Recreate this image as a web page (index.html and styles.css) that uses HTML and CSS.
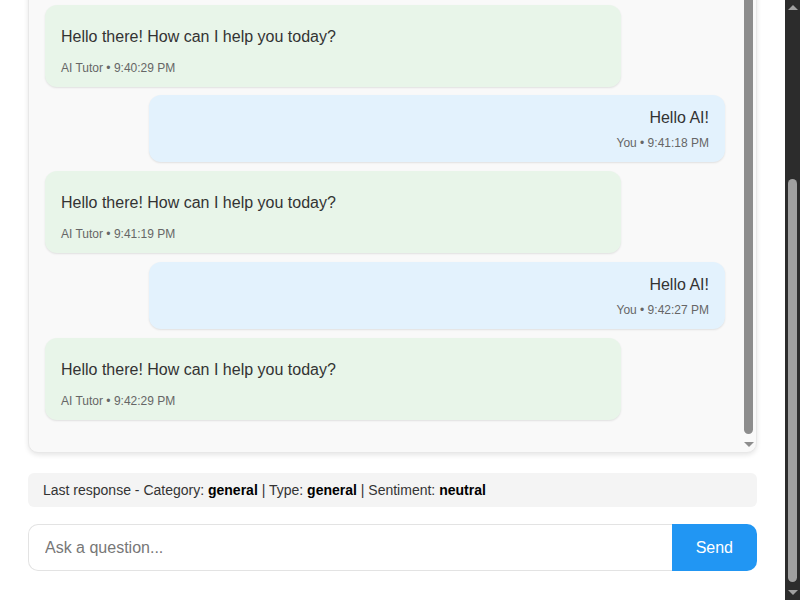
FILE: index.html
```html
<!DOCTYPE html>
<html lang="en">
<head>
<meta charset="utf-8">
<title>AI Tutor</title>
<link rel="stylesheet" href="styles.css">
</head>
<body>
<div class="app">
  <header class="app-header">
    <h1>AI Tutor</h1>
    <p>Ask me anything about your lessons.</p>
  </header>

  <div class="chat-panel">
    <div class="chat" id="chat">
      <div class="msg bot">
        <div class="text">Hi! I'm your AI tutor. What would you like to learn?</div>
        <div class="meta">AI Tutor &bull; 9:40:10 PM</div>
      </div>
      <div class="msg user">
        <div class="text">Hello AI!</div>
        <div class="meta">You &bull; 9:40:28 PM</div>
      </div>
      <div class="msg bot">
        <div class="text">Hello there! How can I help you today?</div>
        <div class="meta">AI Tutor &bull; 9:40:29 PM</div>
      </div>
      <div class="msg user">
        <div class="text">Hello AI!</div>
        <div class="meta">You &bull; 9:41:18 PM</div>
      </div>
      <div class="msg bot">
        <div class="text">Hello there! How can I help you today?</div>
        <div class="meta">AI Tutor &bull; 9:41:19 PM</div>
      </div>
      <div class="msg user">
        <div class="text">Hello AI!</div>
        <div class="meta">You &bull; 9:42:27 PM</div>
      </div>
      <div class="msg bot">
        <div class="text">Hello there! How can I help you today?</div>
        <div class="meta">AI Tutor &bull; 9:42:29 PM</div>
      </div>
    </div>
    <div class="vscroll chat-scrollbar" aria-hidden="true">
      <span class="vscroll-btn up"></span>
      <span class="vscroll-track" id="chat-track"><span class="vscroll-thumb" id="chat-thumb"></span></span>
      <span class="vscroll-btn down"></span>
    </div>
  </div>

  <div class="status">Last response - Category: <b>general</b> | Type: <b>general</b> | Sentiment: <b>neutral</b></div>

  <form class="composer">
    <input class="composer-input" type="text" placeholder="Ask a question...">
    <button class="composer-send" type="button">Send</button>
  </form>
</div>

<div class="vscroll page-scrollbar" aria-hidden="true">
  <span class="vscroll-btn up"></span>
  <span class="vscroll-track" id="page-track"><span class="vscroll-thumb" id="page-thumb"></span></span>
  <span class="vscroll-btn down"></span>
</div>

<script src="script.js"></script>
</body>
</html>
```

FILE: styles.css
```css
html {
  background: #fff;
}

body {
  margin: 8px 23px 8px 8px; /* right side leaves room for the page scrollbar */
  font-family: "Liberation Sans", Arial, sans-serif;
  color: #333;
}

.app {
  padding: 20px 20px 21px;
}

.app-header h1 {
  margin: 0 0 6px;
  font-size: 28px;
  line-height: 34px;
}

.app-header p {
  margin: 0 0 20px;
  line-height: 20px;
  color: #666;
}

/* chat panel */
.chat-panel {
  position: relative;
  background: #f9f9f9;
  border: 1px solid #e8e8e8;
  border-radius: 10px;
  box-shadow: 0 2px 5px rgba(0, 0, 0, 0.1);
}

.chat {
  box-sizing: border-box;
  height: 579px;
  overflow: hidden;
  padding: 16px 31px 32px 16px;
  display: flex;
  flex-direction: column;
  gap: 8.75px;
}

.msg {
  flex: none;
  width: 80%;
  padding: 14px 16px 12px;
  border-radius: 12px;
  box-shadow: 0 1px 2px rgba(0, 0, 0, 0.1);
  font-size: 16px;
}

.msg.bot {
  align-self: flex-start;
  background: #e8f5e9;
}

.msg.bot .text {
  padding: 9px 0 6px;
}

.msg.user {
  align-self: flex-end;
  background: #e3f2fd;
  text-align: right;
}

.meta {
  margin-top: 9px;
  font-size: 12px;
  color: #666;
}

/* scrollbars */
.vscroll {
  display: flex;
  flex-direction: column;
  width: 15px;
}

.vscroll-btn {
  flex: none;
  height: 15px;
  display: flex;
  align-items: center;
  justify-content: center;
}

.vscroll-btn::before {
  content: "";
  border-left: 5px solid transparent;
  border-right: 5px solid transparent;
}

.vscroll-btn.up::before {
  border-bottom: 5px solid currentColor;
}

.vscroll-btn.down::before {
  border-top: 5px solid currentColor;
}

.vscroll-track {
  flex: 1;
  position: relative;
}

.vscroll-thumb {
  position: absolute;
  left: 0;
  right: 0;
  box-sizing: border-box;
  border: 3px solid transparent;
  border-radius: 8px;
  background: currentColor;
  background-clip: padding-box;
}

.chat-scrollbar {
  position: absolute;
  top: 0;
  right: 0;
  bottom: 0;
  color: #8d8d8d;
}

.page-scrollbar {
  position: fixed;
  top: 0;
  right: 0;
  bottom: 0;
  background: #2c2c2c;
  color: #a0a0a0;
}

/* status + composer */
.status {
  margin-top: 20px;
  padding: 9px 15px;
  background: #f4f4f4;
  border-radius: 6px;
  font-size: 14px;
  color: #333;
}

.status b {
  color: #000;
}

.composer {
  display: flex;
  margin: 17px 0 0;
}

.composer-input {
  flex: 1;
  min-width: 0;
  padding: 14px 16px 13px;
  border: 1px solid #e3e3e3;
  border-right: none;
  border-radius: 10px 0 0 10px;
  font-family: inherit;
  font-size: 16px;
  color: #333;
  outline: none;
}

.composer-input::placeholder {
  color: #777;
}

.composer-send {
  padding: 0 24px;
  border: none;
  border-radius: 0 10px 10px 0;
  background: #2196f3;
  color: #fff;
  font-family: inherit;
  font-size: 16px;
  cursor: pointer;
}
```

FILE: script.js
```js
function placeThumb(thumb, track, pos, visible, total) {
  var h = track.clientHeight;
  thumb.style.top = (pos / total * h) + 'px';
  thumb.style.height = (visible / total * h) + 'px';
}

var chat = document.getElementById('chat');
chat.scrollTop = chat.scrollHeight;

var doc = document.documentElement;
window.scrollTo(0, doc.scrollHeight);

placeThumb(
  document.getElementById('chat-thumb'),
  document.getElementById('chat-track'),
  chat.scrollTop, chat.clientHeight, chat.scrollHeight
);

placeThumb(
  document.getElementById('page-thumb'),
  document.getElementById('page-track'),
  window.scrollY, window.innerHeight, doc.scrollHeight
);
```
